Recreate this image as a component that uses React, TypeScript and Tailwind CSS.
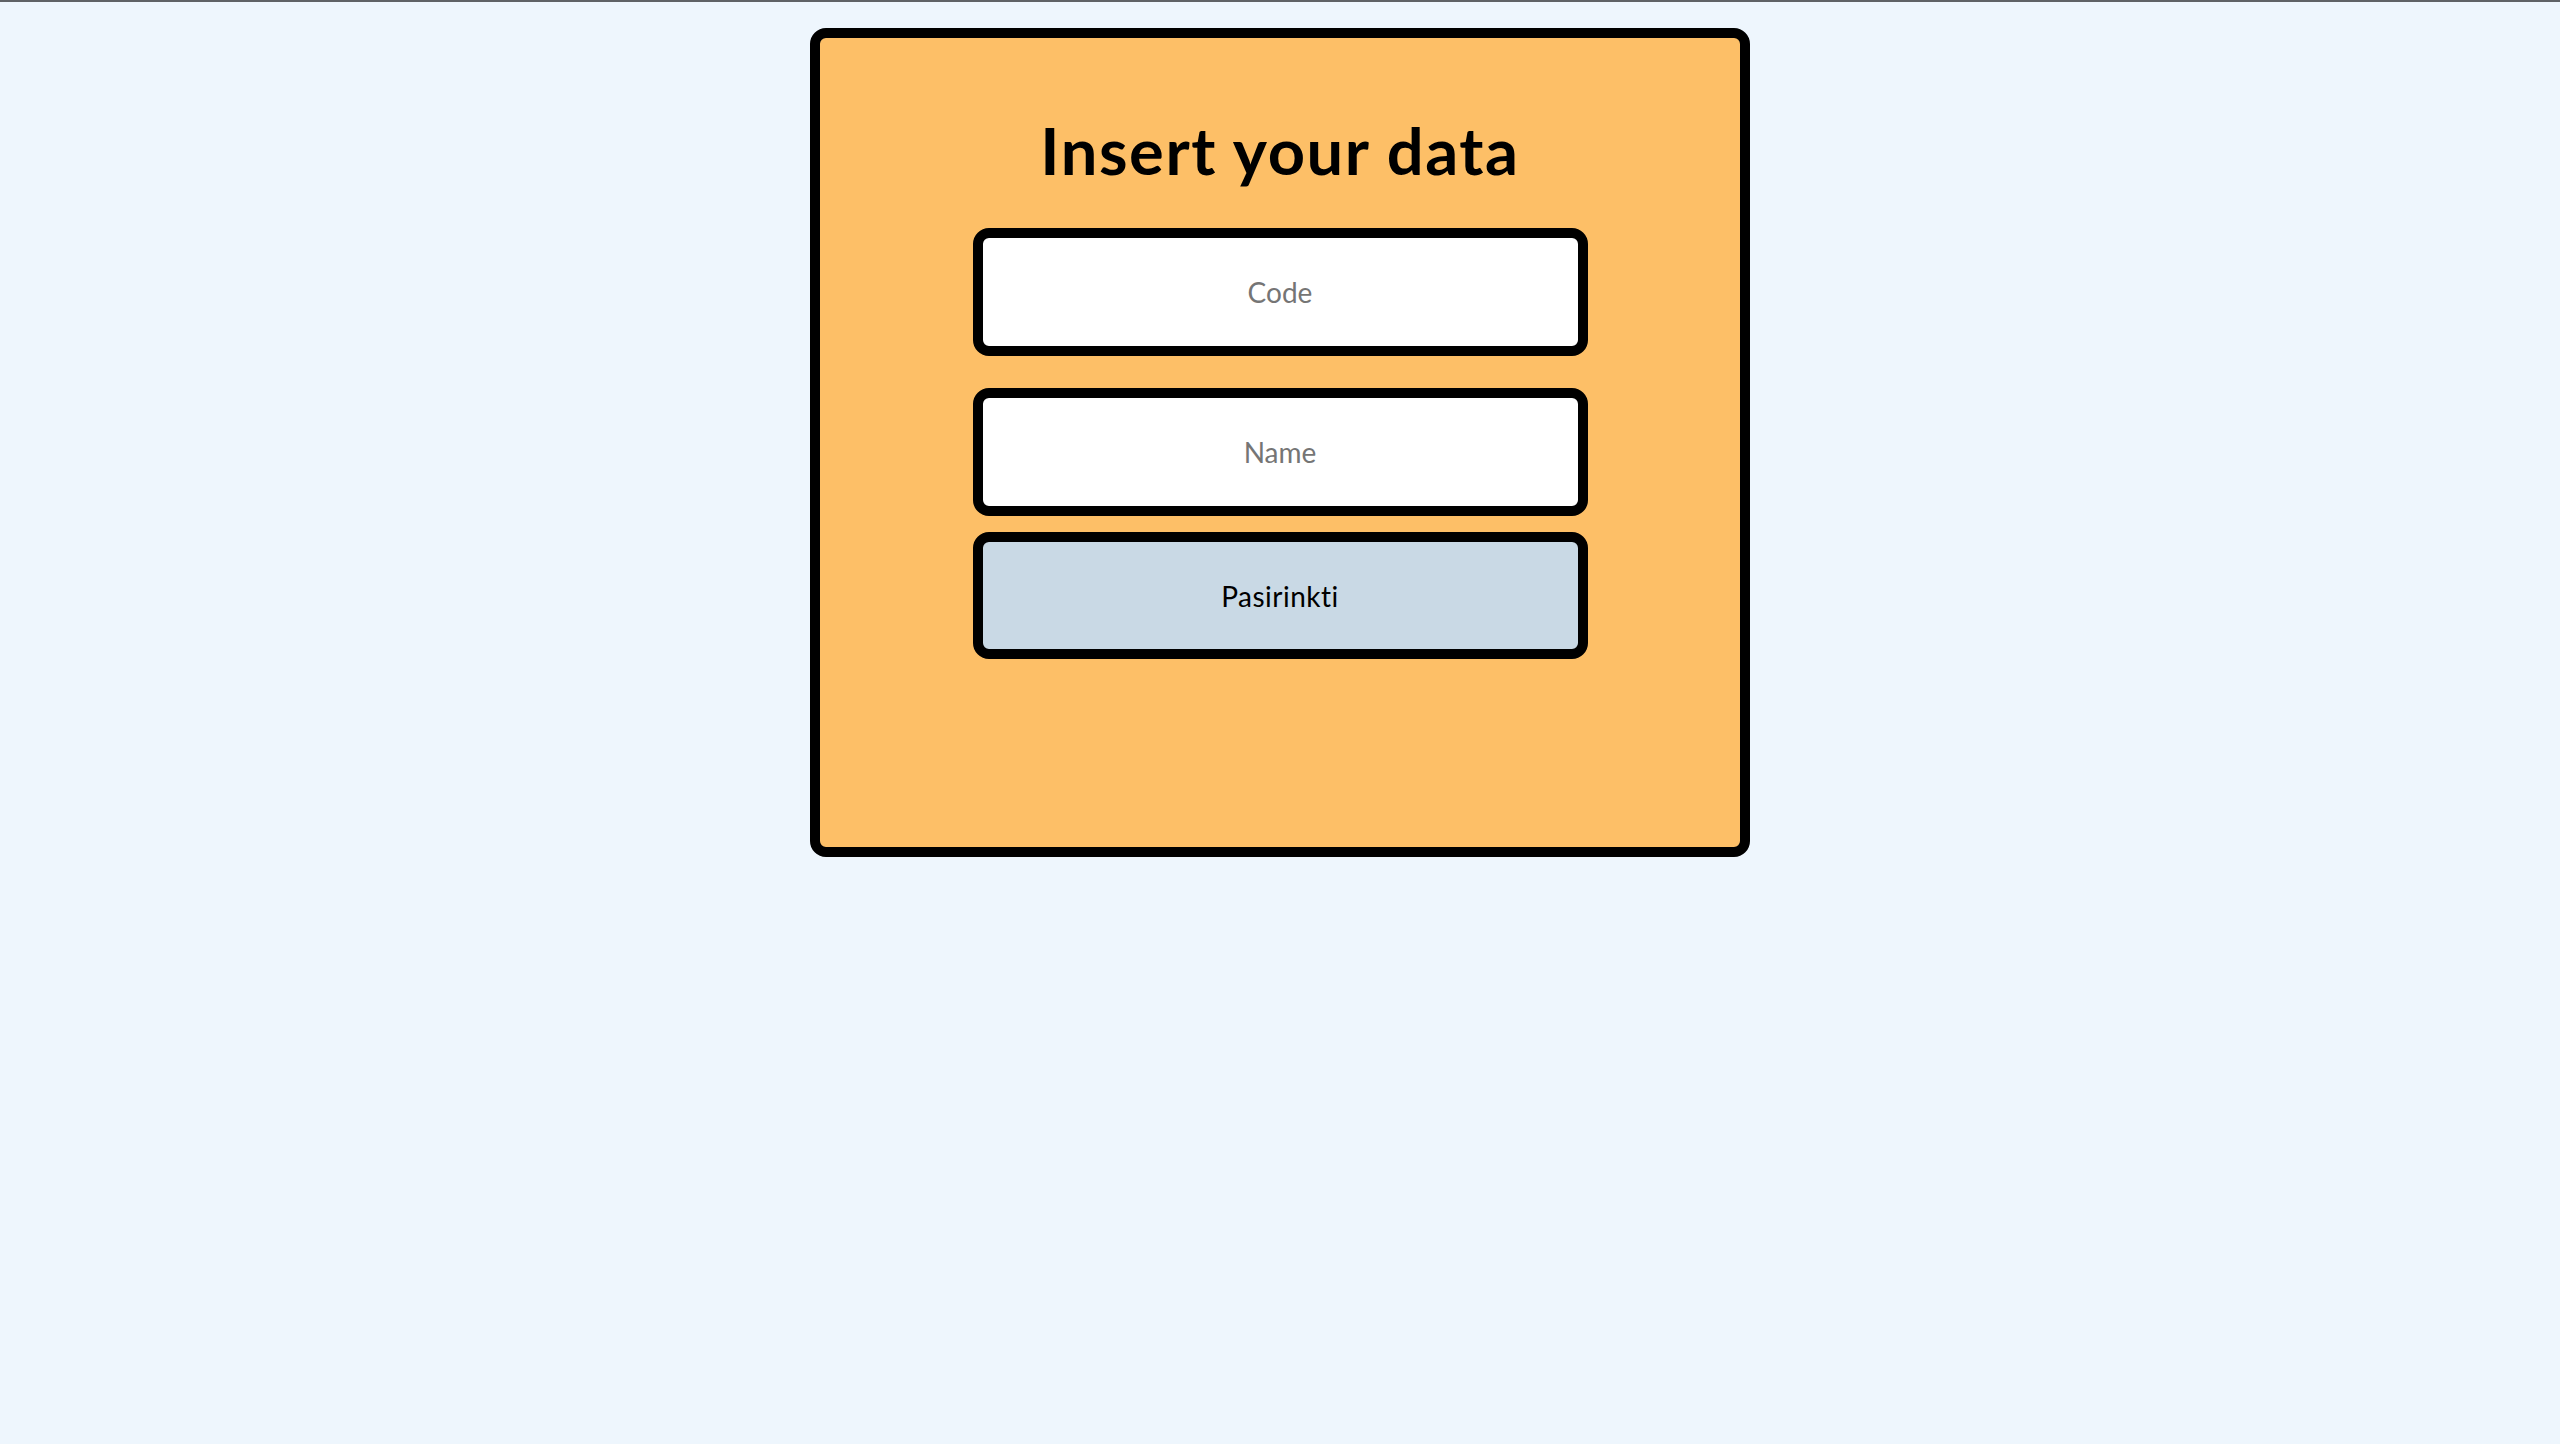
export default function App() {
  return (
    <div className="min-h-screen bg-[#eef6fd] border-t-2 border-[#5f6266] flex justify-center pt-[26px] font-['Lato',sans-serif]">
      {/* Form card */}
      <div className="w-[940px] h-[829px] bg-[#fdbf67] border-[10px] border-black rounded-[16px] flex flex-col items-center pt-[80px]">
        <h1 className="text-[65px] leading-none font-bold tracking-[1.6px] text-black">Insert your data</h1>

        <input
          type="text"
          placeholder="Code"
          className="mt-[45px] w-[615px] h-[128px] bg-white border-[10px] border-black rounded-[16px] text-center text-[28px] text-black placeholder:text-[#757575] outline-none"
        />
        <input
          type="text"
          placeholder="Name"
          className="mt-[32px] w-[615px] h-[128px] bg-white border-[10px] border-black rounded-[16px] text-center text-[28px] text-black placeholder:text-[#757575] outline-none"
        />
        <button className="mt-[16px] w-[615px] h-[127px] bg-[#c9d9e5] border-[10px] border-black rounded-[16px] text-[28px] tracking-[0.5px] text-black">
          Pasirinkti
        </button>
      </div>
    </div>
  )
}
